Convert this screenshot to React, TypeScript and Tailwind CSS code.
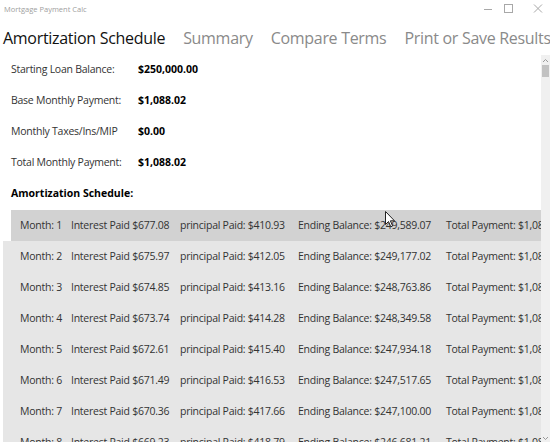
import { useState } from 'react'

const font = { fontFamily: '"Open Sans", "Noto Sans", "Liberation Sans", sans-serif' }

const summary = [
    { label: 'Starting Loan Balance:', value: '$250,000.00' },
    { label: 'Base Monthly Payment:', value: '$1,088.02' },
    { label: 'Monthly Taxes/Ins/MIP', value: '$0.00' },
    { label: 'Total Monthly Payment:', value: '$1,088.02' },
]

const schedule = [
    { month: 1, interest: '677.08', principal: '410.93', balance: '249,589.07' },
    { month: 2, interest: '675.97', principal: '412.05', balance: '249,177.02' },
    { month: 3, interest: '674.85', principal: '413.16', balance: '248,763.86' },
    { month: 4, interest: '673.74', principal: '414.28', balance: '248,349.58' },
    { month: 5, interest: '672.61', principal: '415.40', balance: '247,934.18' },
    { month: 6, interest: '671.49', principal: '416.53', balance: '247,517.65' },
    { month: 7, interest: '670.36', principal: '417.66', balance: '247,100.00' },
    { month: 8, interest: '669.23', principal: '418.79', balance: '246,681.21' },
]

const tabs = ['Amortization Schedule', 'Summary', 'Compare Terms', 'Print or Save Results']

export default function App() {
    const [activeTab, setActiveTab] = useState(0)
    const [selected, setSelected] = useState(1)

    return (
        <div className="w-[550px] h-[442px] bg-white overflow-hidden relative flex flex-col text-[#222]" style={font}>
            {/* title bar */}
            <div className="h-[22px] flex items-start shrink-0">
                <span className="text-[7.5px] text-[#a0a0a0] pl-[4px] pt-[4px] leading-[10px]">Mortgage Payment Calc</span>
                <div className="ml-auto flex items-start">
                    <svg width="46" height="16" viewBox="0 0 46 16" className="mt-[1px]">
                        <line x1="30" y1="8.5" x2="38" y2="8.5" stroke="#a8a8a8" strokeWidth="1" />
                    </svg>
                    <svg width="30" height="16" viewBox="0 0 30 16" className="mt-[1px]">
                        <rect x="4.5" y="3.5" width="8" height="8" fill="none" stroke="#a8a8a8" strokeWidth="1" />
                    </svg>
                    <svg width="20" height="16" viewBox="0 0 20 16" className="mt-[1px]">
                        <path d="M4 3.5 L12 11.5 M12 3.5 L4 11.5" stroke="#a8a8a8" strokeWidth="1" />
                    </svg>
                </div>
            </div>

            {/* pivot headers */}
            <div className="h-[31px] flex items-center gap-[18px] pl-[3px] whitespace-nowrap shrink-0">
                {tabs.map((t, i) => (
                    <button
                        key={t}
                        onClick={() => setActiveTab(i)}
                        className={`text-[16px] leading-[24px] tracking-[-0.3px] ${i === activeTab ? 'text-[#111]' : 'text-[#8a8a8a]'}`}
                    >
                        {t}
                    </button>
                ))}
            </div>

            <div className="flex flex-1 min-h-0 pt-[1px]">
                <div className="flex-1 min-w-0 flex flex-col">
                    {/* loan summary */}
                    {summary.map(s => (
                        <div key={s.label} className="h-[31px] shrink-0 flex items-center text-[10.5px] whitespace-nowrap">
                            <span className="w-[138px] shrink-0 pl-[11px] text-[#333] tracking-[-0.25px]">{s.label}</span>
                            <span className="font-bold text-black">{s.value}</span>
                        </div>
                    ))}
                    <div className="h-[31px] shrink-0 flex items-center text-[10.5px] pl-[11px] font-bold text-black">
                        Amortization Schedule:
                    </div>

                    {/* monthly rows */}
                    <div className="flex flex-col pl-[3px] pt-[1px]">
                        {schedule.map(r => (
                            <div
                                key={r.month}
                                onClick={() => setSelected(r.month)}
                                className={`h-[31px] shrink-0 flex items-center text-[10.5px] tracking-[-0.25px] whitespace-nowrap overflow-hidden text-[#333] ${r.month === selected ? 'bg-[#d2d2d2] border-l-[8px] border-white pl-[9px]' : 'bg-[#e6e6e6] pl-[17px]'}`}
                            >
                                <span className="w-[51px] shrink-0">Month: {r.month}</span>
                                <span className="w-[109px] shrink-0">Interest Paid ${r.interest}</span>
                                <span className="w-[118px] shrink-0">principal Paid: ${r.principal}</span>
                                <span className="w-[148px] shrink-0">Ending Balance: ${r.balance}</span>
                                <span className="shrink-0">Total Payment: $1,088.02</span>
                            </div>
                        ))}
                    </div>
                </div>

                {/* scroll bar */}
                <div className="w-[9px] shrink-0 bg-[#f0f0f0] flex flex-col items-center mt-[1px]">
                    <svg width="7" height="6" viewBox="0 0 7 6" className="mt-[3px]">
                        <path d="M1 4 L3.5 1.5 L6 4" fill="none" stroke="#9a9a9a" strokeWidth="1" />
                    </svg>
                    <div className="w-[7px] h-[12px] bg-[#c2c2c2] mt-[1px]" />
                    <div className="flex-1" />
                    <svg width="7" height="6" viewBox="0 0 7 6" className="mb-[1px]">
                        <path d="M1 2 L3.5 4.5 L6 2" fill="none" stroke="#9a9a9a" strokeWidth="1" />
                    </svg>
                </div>
            </div>

            {/* mouse pointer */}
            <svg width="11" height="17" viewBox="0 0 11 17" className="absolute left-[385px] top-[211px]">
                <path d="M0.5 0.5 L0.5 13.5 L3.5 10.5 L5.8 15.8 L7.6 15 L5.4 9.8 L9.5 9.8 Z" fill="#fff" stroke="#222" strokeWidth="1" strokeLinejoin="round" />
            </svg>
        </div>
    )
}
